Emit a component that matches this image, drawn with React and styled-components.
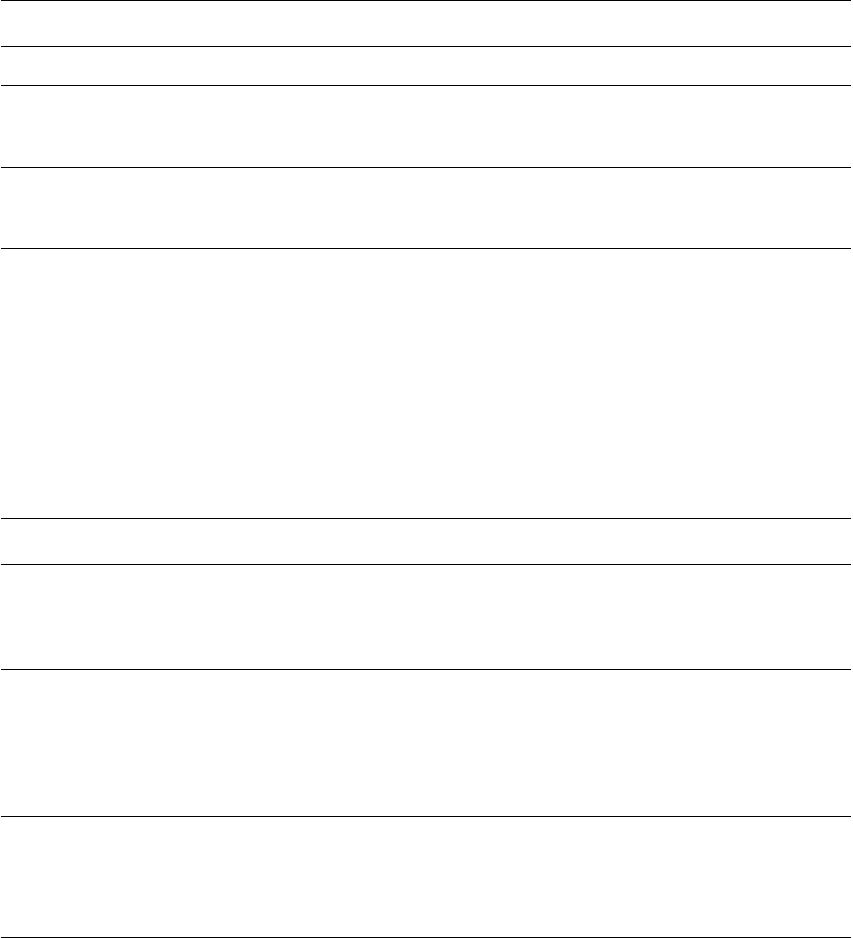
import React from "react";
import styled, { createGlobalStyle } from "styled-components";

const GlobalStyle = createGlobalStyle`
  html, body {
    margin: 0;
    padding: 0;
    background: #ffffff;
    font-family: "Liberation Sans", Arial, sans-serif;
  }
`;

const Table = styled.div`
  display: flex;
  flex-direction: column;
  margin: 0 2px 0 1px;
  border-bottom: 1px solid #000;
`;

const Row = styled.div`
  box-sizing: border-box;
  height: ${(p) => p.$h}px;
  border-top: 1px solid #000;
`;

// row heights include the 1px top rule
const rows = [46, 39, 82, 81, 270, 46, 105, 147, 121];

export default function App() {
  return (
    <>
      <GlobalStyle />
      <Table>
        {rows.map((h, i) => (
          <Row key={i} $h={h} />
        ))}
      </Table>
    </>
  );
}
